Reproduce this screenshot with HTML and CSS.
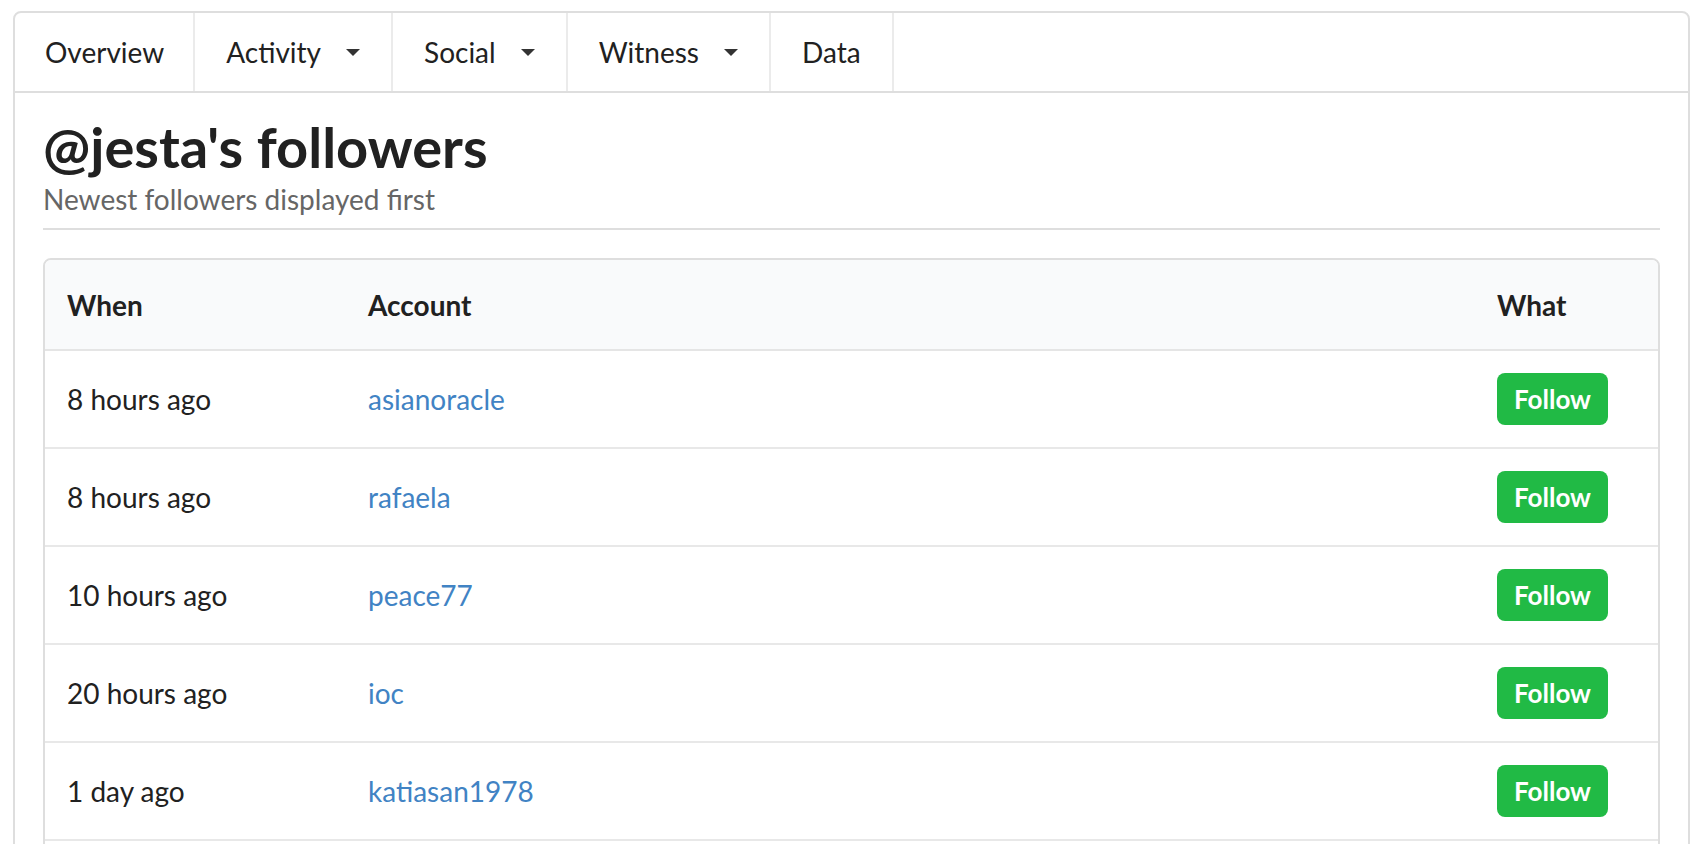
FILE: index.html
```html
<!DOCTYPE html>
<html lang="en">
<head>
<meta charset="utf-8">
<title>@jesta's followers</title>
<link rel="stylesheet" href="styles.css">
</head>
<body>
<div class="page">
  <div class="card">
    <nav class="tabs">
      <a class="tab" href="#">Overview</a>
      <a class="tab" href="#">Activity<span class="caret"></span></a>
      <a class="tab" href="#">Social<span class="caret"></span></a>
      <a class="tab" href="#">Witness<span class="caret"></span></a>
      <a class="tab" href="#">Data</a>
    </nav>
    <section class="content">
      <div class="page-header">
        <h2 class="title">@jesta's followers</h2>
        <div class="subtitle">Newest followers displayed first</div>
      </div>
      <table class="list">
        <colgroup>
          <col class="col-when">
          <col class="col-account">
          <col class="col-what">
        </colgroup>
        <thead>
          <tr><th>When</th><th>Account</th><th>What</th></tr>
        </thead>
        <tbody>
          <tr><td>8 hours ago</td><td><a class="account" href="#">asianoracle</a></td><td><button class="follow">Follow</button></td></tr>
          <tr><td>8 hours ago</td><td><a class="account" href="#">rafaela</a></td><td><button class="follow">Follow</button></td></tr>
          <tr><td>10 hours ago</td><td><a class="account" href="#">peace77</a></td><td><button class="follow">Follow</button></td></tr>
          <tr><td>20 hours ago</td><td><a class="account" href="#">ioc</a></td><td><button class="follow">Follow</button></td></tr>
          <tr><td>1 day ago</td><td><a class="account" href="#">katiasan1978</a></td><td><button class="follow">Follow</button></td></tr>
          <tr class="next"><td></td><td></td><td></td></tr>
        </tbody>
      </table>
    </section>
  </div>
</div>
</body>
</html>
```

FILE: styles.css
```css
html, body {
  margin: 0;
  padding: 0;
  background: #ffffff;
}

body {
  font-family: Lato, "Open Sans", "Liberation Sans", sans-serif;
  font-size: 28px;
  color: #212121;
}

.page {
  padding: 11px 16px 0 13px;
}

.card {
  border: 2px solid #dedede;
  border-radius: 8px 8px 0 0;
  background: #ffffff;
}

/* ---------- tabs ---------- */
.tabs {
  display: flex;
  border-bottom: 2px solid #dedede;
}

.tab {
  display: flex;
  align-items: center;
  padding: 25px 31px 25px 31px;
  line-height: 28px;
  font-size: 28px;
  color: #212121;
  text-decoration: none;
  border-right: 2px solid #ebebeb;
}

.tab:first-child {
  padding-left: 30px;
  padding-right: 29px;
}

.caret {
  display: inline-block;
  width: 0;
  height: 0;
  margin-left: 25px;
  margin-top: 1px;
  border-left: 7px solid transparent;
  border-right: 7px solid transparent;
  border-top: 7px solid #333333;
}

/* ---------- content ---------- */
.content {
  padding: 28px;
}

.page-header {
  border-bottom: 2px solid #dedede;
  padding-bottom: 11px;
  margin-bottom: 28px;
}

.title {
  margin: -8px 0 0 0;
  font-size: 56px;
  font-weight: 700;
  line-height: 1.2;
  color: #212121;
}

.subtitle {
  margin-top: 3px;
  font-size: 28px;
  line-height: 1.2;
  color: #666666;
}

/* ---------- table ---------- */
.list {
  width: 100%;
  table-layout: fixed;
  border-collapse: separate;
  border-spacing: 0;
  border: 2px solid #dedede;
  border-radius: 8px 8px 0 0;
  overflow: hidden;
}

.col-when { width: 301px; }
.col-what { width: 183px; }

.list th {
  text-align: left;
  font-weight: 700;
  background: #f9fafb;
  padding: 25px 22px 24px;
  line-height: 40px;
  border-bottom: 2px solid #e5e5e5;
}

.list td {
  padding: 22px;
  line-height: 40px;
  height: 52px;
  vertical-align: middle;
  border-top: 2px solid #e8e8e8;
}

.list tbody tr:first-child td {
  border-top: none;
}

.account {
  color: #4183c4;
  text-decoration: none;
}

.follow {
  display: block;
  font-family: Lato, "Open Sans", "Liberation Sans", sans-serif;
  font-size: 26px;
  font-weight: 700;
  line-height: 26px;
  color: #ffffff;
  background: #21ba45;
  border: none;
  border-radius: 8px;
  padding: 13px 17px;
  height: 52px;
  cursor: pointer;
}
```
